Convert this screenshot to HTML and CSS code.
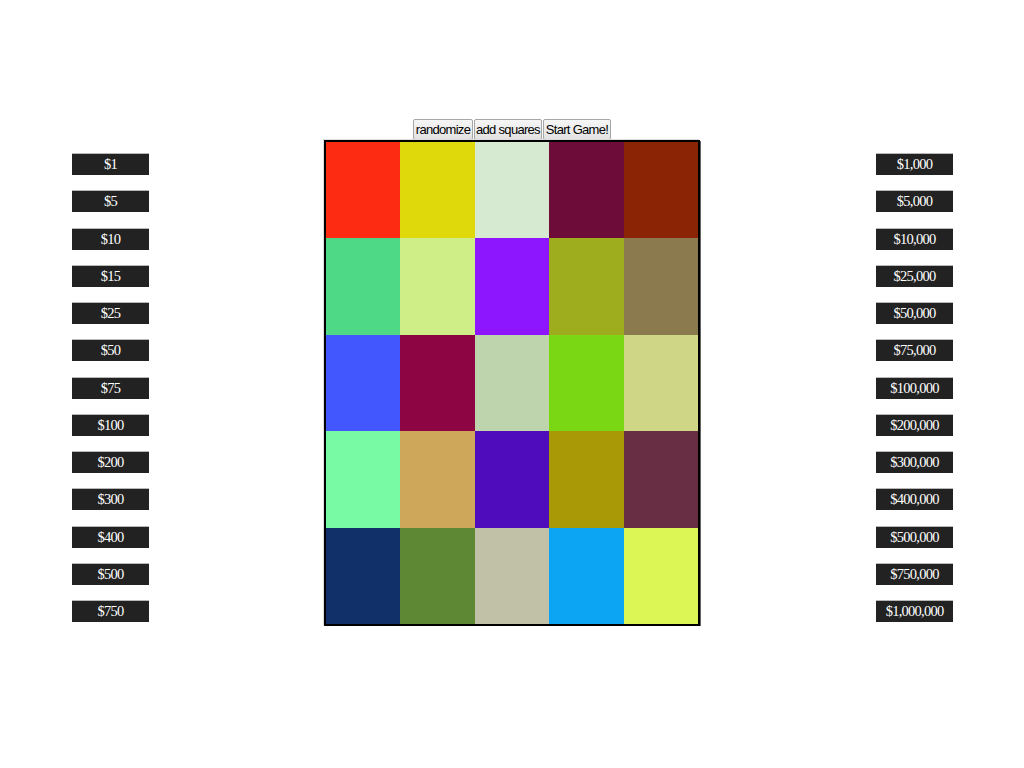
FILE: index.html
```html
<!DOCTYPE html>
<html>
<head>
<meta charset="utf-8">
<link rel="stylesheet" href="styles.css">
</head>
<body>
<div class="page">
  <div class="ladder left">
    <div class="prize">$1</div>
    <div class="prize">$5</div>
    <div class="prize">$10</div>
    <div class="prize">$15</div>
    <div class="prize">$25</div>
    <div class="prize">$50</div>
    <div class="prize">$75</div>
    <div class="prize">$100</div>
    <div class="prize">$200</div>
    <div class="prize">$300</div>
    <div class="prize">$400</div>
    <div class="prize">$500</div>
    <div class="prize">$750</div>
  </div>
  <div class="center">
    <div class="controls">
      <button class="btn b1">randomize</button><button class="btn b2">add squares</button><button class="btn b3">Start Game!</button>
    </div>
    <div class="board">
      <div class="sq c1"></div><div class="sq c2"></div><div class="sq c3"></div><div class="sq c4"></div><div class="sq c5"></div>
      <div class="sq c6"></div><div class="sq c7"></div><div class="sq c8"></div><div class="sq c9"></div><div class="sq c10"></div>
      <div class="sq c11"></div><div class="sq c12"></div><div class="sq c13"></div><div class="sq c14"></div><div class="sq c15"></div>
      <div class="sq c16"></div><div class="sq c17"></div><div class="sq c18"></div><div class="sq c19"></div><div class="sq c20"></div>
      <div class="sq c21"></div><div class="sq c22"></div><div class="sq c23"></div><div class="sq c24"></div><div class="sq c25"></div>
    </div>
  </div>
  <div class="ladder right">
    <div class="prize">$1,000</div>
    <div class="prize">$5,000</div>
    <div class="prize">$10,000</div>
    <div class="prize">$25,000</div>
    <div class="prize">$50,000</div>
    <div class="prize">$75,000</div>
    <div class="prize">$100,000</div>
    <div class="prize">$200,000</div>
    <div class="prize">$300,000</div>
    <div class="prize">$400,000</div>
    <div class="prize">$500,000</div>
    <div class="prize">$750,000</div>
    <div class="prize">$1,000,000</div>
  </div>
</div>
</body>
</html>
```
FILE: styles.css
```css
html, body {
  margin: 0;
  padding: 0;
  background: #fff;
}
.page {
  display: flex;
  align-items: flex-start;
  padding-top: 119px;
}
.ladder {
  display: flex;
  flex-direction: column;
  gap: 15.25px;
  width: 77px;
  padding-top: 34px;
}
.left {
  margin-left: 72px;
}
.right {
  margin-left: 176px;
}
.prize {
  box-sizing: border-box;
  height: 22px;
  background: #222;
  border-top: 1px solid #b8b8b8;
  color: #fff;
  font-family: "Liberation Serif", "Times New Roman", serif;
  font-size: 14.5px;
  line-height: 21px;
  text-align: center;
  letter-spacing: -0.75px;
}
.center {
  margin-left: 175px;
  width: 376px;
  display: flex;
  flex-direction: column;
  align-items: center;
}
.controls {
  display: flex;
  gap: 1px;
  height: 21px;
}
.btn {
  box-sizing: border-box;
  height: 21px;
  padding: 0;
  margin: 0;
  font-family: "Liberation Sans", Arial, sans-serif;
  font-size: 13px;
  color: #000;
  background: linear-gradient(#f6f6f6, #e2e2e2);
  border: 1px solid #a6a6a6;
  border-radius: 2px;
  letter-spacing: -0.7px;
}
.b1 { width: 60px; }
.b2 { width: 68px; }
.b3 { width: 68px; }
.board {
  box-sizing: border-box;
  width: 376px;
  height: 486px;
  border: 2px solid #000;
  box-shadow: 1px 1px 0 #666, -1px -1px 0 #ddd;
  display: grid;
  grid-template-columns: repeat(5, 1fr);
  grid-template-rows: repeat(5, 1fr);
}
.c1 { background: #fe2b13; }
.c2 { background: #dfd90b; }
.c3 { background: #d5ead0; }
.c4 { background: #6d0c38; }
.c5 { background: #8b2405; }
.c6 { background: #4dd985; }
.c7 { background: #cfee88; }
.c8 { background: #8d16fe; }
.c9 { background: #9dad1e; }
.c10 { background: #8b7a4d; }
.c11 { background: #4257fe; }
.c12 { background: #8e0543; }
.c13 { background: #bed4ad; }
.c14 { background: #7ad714; }
.c15 { background: #cfd787; }
.c16 { background: #78f9a4; }
.c17 { background: #cfa75b; }
.c18 { background: #4f0cbc; }
.c19 { background: #aa9906; }
.c20 { background: #672e44; }
.c21 { background: #11306a; }
.c22 { background: #5f8834; }
.c23 { background: #c0c1a7; }
.c24 { background: #0ca5f3; }
.c25 { background: #dbf655; }
```
